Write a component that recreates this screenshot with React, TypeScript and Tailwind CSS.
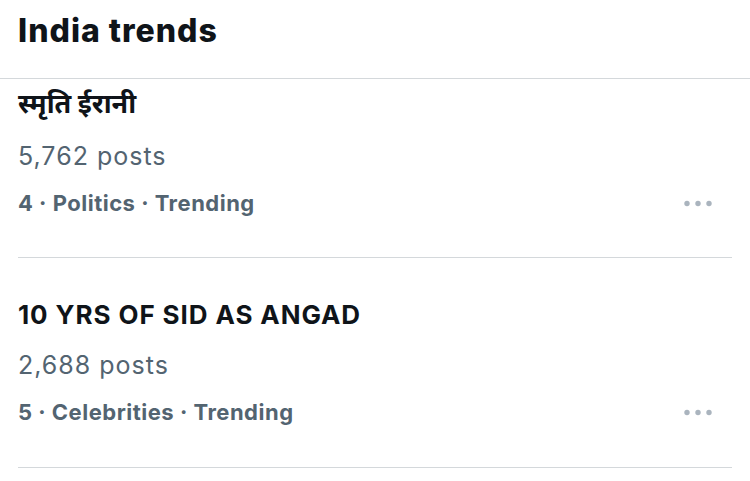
const trends = [
  {
    title: "स्मृति ईरानी",
    titleClass: "text-[27px] leading-[30px]",
    posts: "5,762 posts",
    meta: "4 · Politics · Trending",
    pad: "pt-[10px] pb-[40px]",
    postsGap: "mt-[22px]",
  },
  {
    title: "10 YRS OF SID AS ANGAD",
    titleClass: "text-[26px] leading-[30px] tracking-[0.9px]",
    posts: "2,688 posts",
    meta: "5 · Celebrities · Trending",
    pad: "pt-[42px] pb-[41px]",
    postsGap: "mt-[20px]",
  },
];

const MoreDots = () => (
  <svg width="28" height="7" viewBox="0 0 28 7" className="mr-[20px]">
    <circle cx="3" cy="3.5" r="2.7" fill="#aab4be" />
    <circle cx="14" cy="3.5" r="2.7" fill="#aab4be" />
    <circle cx="25" cy="3.5" r="2.7" fill="#aab4be" />
  </svg>
);

export default function App() {
  return (
    <div className="w-[750px] h-[481px] bg-white overflow-hidden font-['Inter','Noto_Sans','Noto_Sans_Devanagari',sans-serif] text-[#0f1419]">
      <div className="h-[79px] border-b border-[#d4d8db] px-[18px] pt-[12px]">
        <h1 className="text-[32px] leading-[38px] font-extrabold tracking-[1px]">
          India trends
        </h1>
      </div>

      {trends.map((t) => (
        <div key={t.posts} className={`mx-[18px] border-b border-[#d4d8db] ${t.pad}`}>
          <div className={`${t.titleClass} font-bold`}>{t.title}</div>
          <div className={`${t.postsGap} text-[25px] leading-[30px] tracking-[1px] text-[#536471]`}>
            {t.posts}
          </div>
          <div className="mt-[18px] flex items-center justify-between">
            <span className="text-[22px] leading-[28px] font-bold tracking-[0.5px] text-[#536471]">
              {t.meta}
            </span>
            <MoreDots />
          </div>
        </div>
      ))}
    </div>
  );
}
